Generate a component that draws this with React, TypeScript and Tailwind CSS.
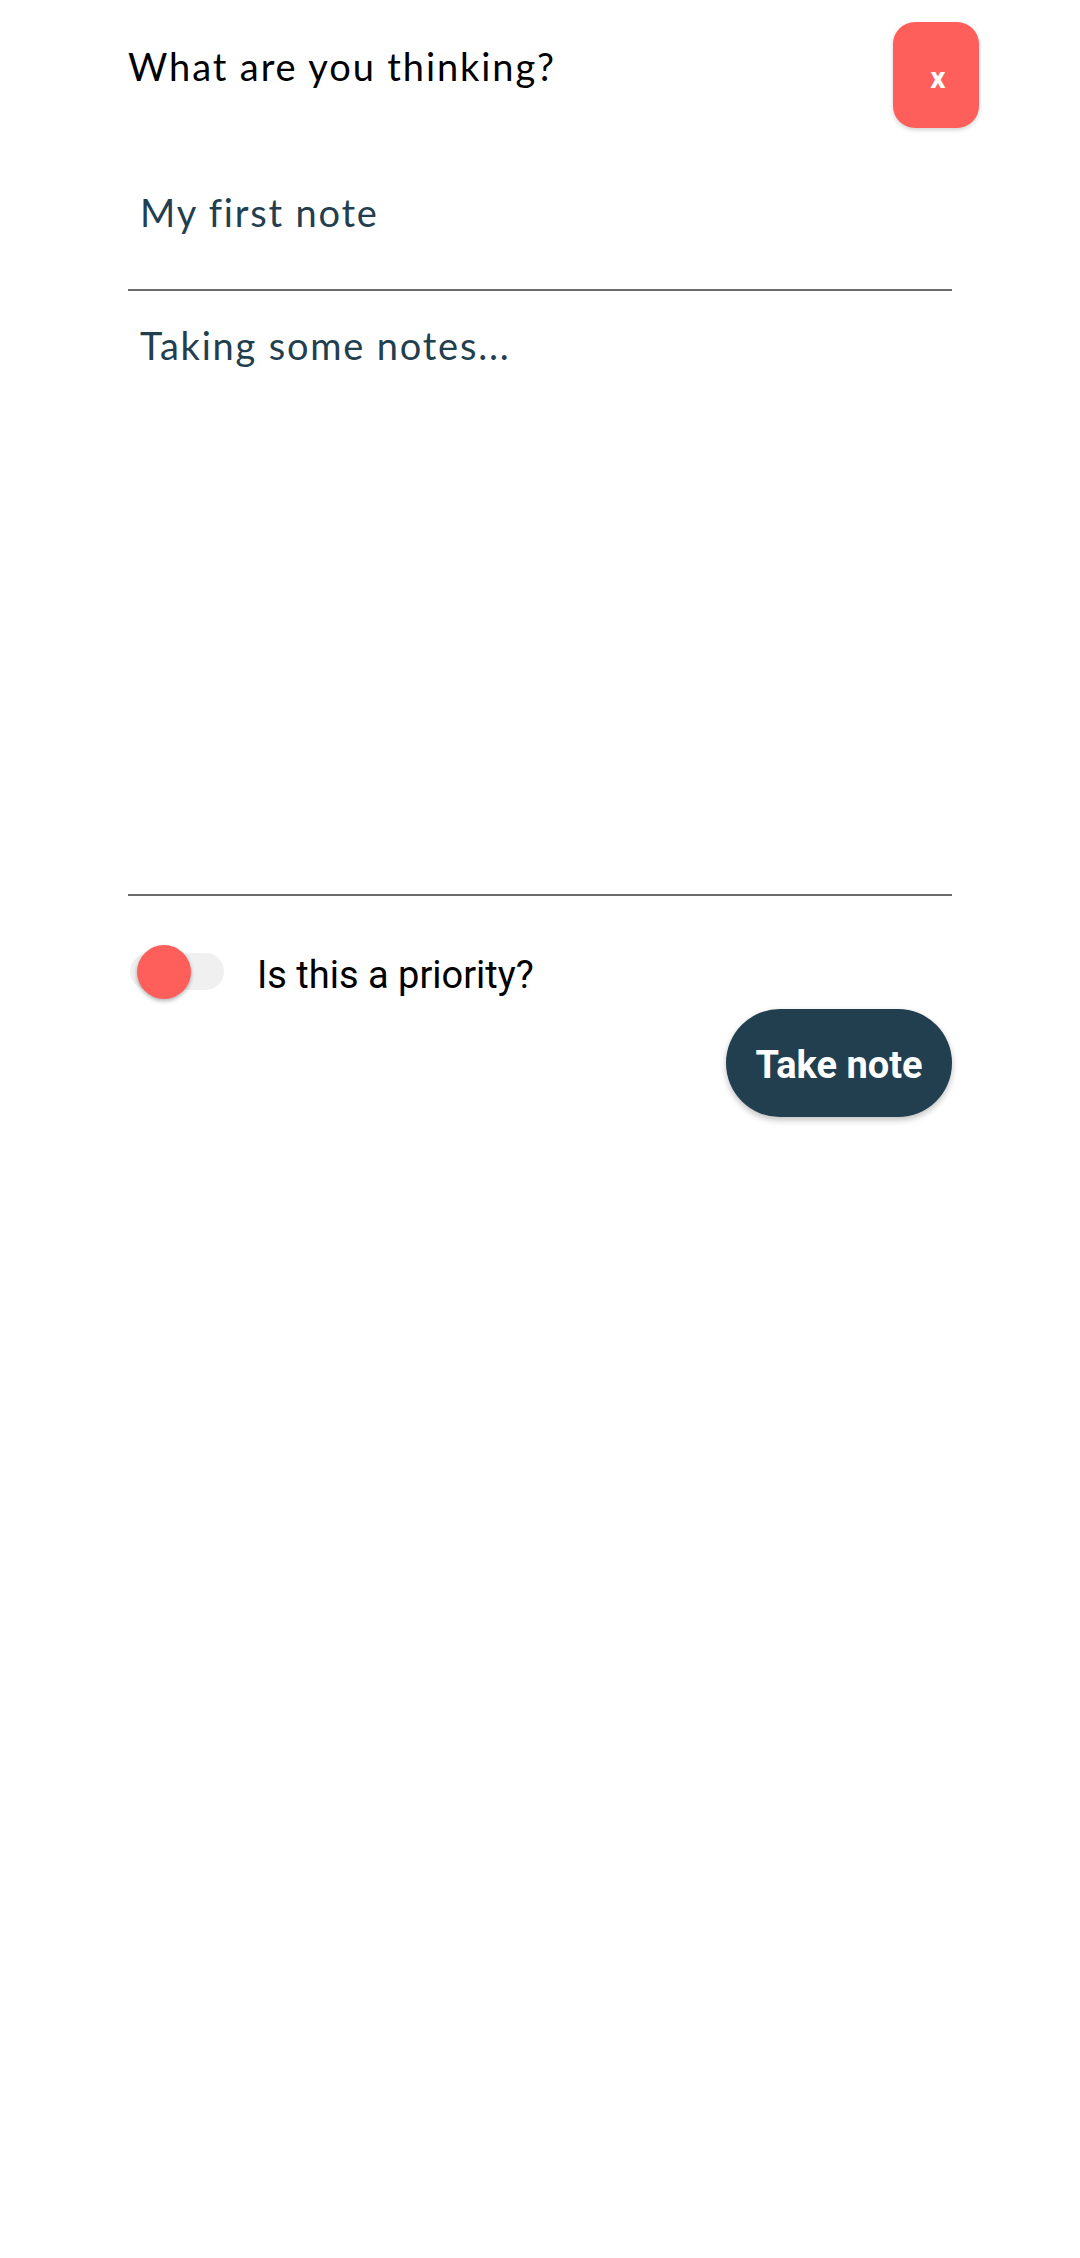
export default function App() {
  return (
    <div className="min-h-[2258px] w-full bg-white">
      {/* header */}
      <div className="flex items-start justify-between pl-[128px] pr-[101px] pt-[22px]">
        <h1 className="mt-[25px] text-[38px] leading-[38px] tracking-[1.9px] text-black" style={{ fontFamily: 'Lato, "Noto Sans", sans-serif' }}>
          What are you thinking?
        </h1>
        <button className="flex h-[106px] w-[86px] items-center justify-center rounded-[22px] bg-[#ff5f5b] pl-[4px] pt-[6px] text-[30px] font-bold leading-none text-white shadow-[0_2px_4px_rgba(0,0,0,0.18)]" style={{ fontFamily: 'Roboto, sans-serif' }}>
          x
        </button>
      </div>

      <div className="pl-[128px] pr-[128px]" style={{ fontFamily: 'Lato, "Noto Sans", sans-serif' }}>
        {/* title field */}
        <div className="border-b-2 border-[#6b6b6b] pb-[58px] pl-[12px] pt-[65px] text-[38px] leading-[38px] tracking-[1.8px] text-[#233f4f]">
          My first note
        </div>

        {/* body field */}
        <div className="h-[605px] border-b-2 border-[#6b6b6b] pl-[12px] pt-[35px] text-[38px] leading-[38px] tracking-[1.8px] text-[#233f4f]">
          Taking some notes...
        </div>

        {/* priority switch */}
        <div className="mt-[49px] flex items-center gap-[33px]" style={{ fontFamily: 'Roboto, sans-serif' }}>
          <div className="relative ml-[2px] h-[54px] w-[94px]">
            <div className="absolute left-0 right-0 top-[8px] h-[37px] rounded-full bg-[#f0f0f0]" />
            <div className="absolute left-[7px] top-0 h-[54px] w-[54px] rounded-full bg-[#ff5f5b] shadow-[0_2px_4px_rgba(0,0,0,0.3)]" />
          </div>
          <span className="pt-[5px] text-[38px] leading-none text-black">Is this a priority?</span>
        </div>

        {/* submit */}
        <div className="mt-[10px] flex justify-end">
          <button className="h-[108px] w-[226px] rounded-full bg-[#223f50] pt-[5px] text-[38px] font-bold text-white shadow-[0_3px_6px_rgba(0,0,0,0.25)]" style={{ fontFamily: 'Roboto, sans-serif' }}>
            Take note
          </button>
        </div>
      </div>
    </div>
  )
}
